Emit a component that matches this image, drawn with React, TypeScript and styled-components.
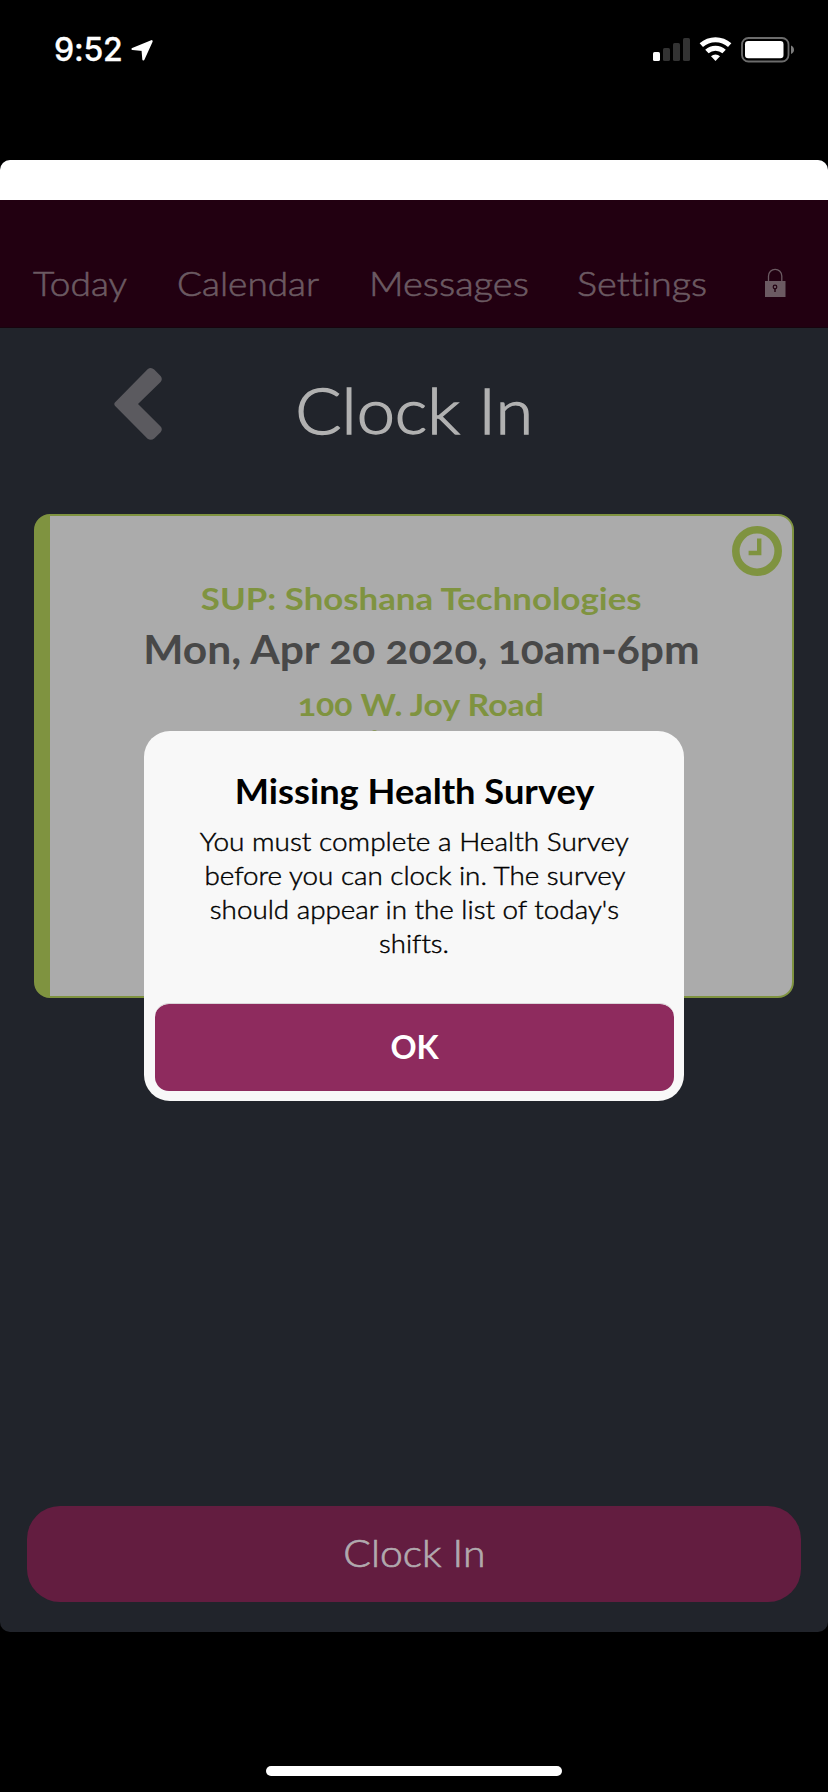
import React from "react";
import styled, { createGlobalStyle } from "styled-components";

const GlobalStyle = createGlobalStyle`
  * { box-sizing: border-box; }
  body { margin: 0; background: #000; }
  button { border: 0; padding: 0; font: inherit; color: inherit; }
`;

const Screen = styled.div`
  position: relative;
  width: 828px;
  height: 1792px;
  display: flex;
  flex-direction: column;
  background: #000;
  font-family: Lato, "Open Sans", sans-serif;
  overflow: hidden;
`;

const Wide = styled.span<{ $by: number; $from?: "left" | "center" }>`
  display: inline-block;
  white-space: nowrap;
  font-variant-ligatures: none;
  transform: scaleX(${(p) => p.$by});
  transform-origin: ${(p) => p.$from ?? "center"};
`;

const StatusBar = styled.div`
  height: 160px;
  padding: 30px 34px 0 54px;
  display: flex;
  justify-content: space-between;
  align-items: flex-start;
`;

const StatusGroup = styled.div<{ $gap: number }>`
  height: 40px;
  display: flex;
  align-items: center;
  gap: ${(p) => p.$gap}px;
  color: #fff;
`;

const Time = styled.span`
  width: 69px;
  font: 500 32px/40px Inter, sans-serif;
  letter-spacing: -0.2px;
  -webkit-text-stroke: 0.3px #fff;
`;

const Sheet = styled.div`
  height: 1472px;
  border-radius: 10px;
  overflow: hidden;
  display: flex;
  flex-direction: column;
  background: #21242b;
`;

const WhiteStrip = styled.div`
  height: 40px;
  background: #fff;
`;

const Nav = styled.nav`
  height: 128px;
  padding: 62px 0 0 33px;
  display: grid;
  grid-template-columns: 144px 192px 208px 188px auto;
  align-items: start;
  justify-items: start;
  background: #220011;
  border-bottom: 1px solid #17040e;
  color: #6b5a62;
  font-size: 34px;
  font-weight: 300;
  line-height: 41px;
  -webkit-text-stroke: 0.6px #6b5a62;
`;

const LockIcon = styled.svg`
  display: block;
  margin-top: 6px;
`;

const TitleRow = styled.header`
  height: 186px;
  padding-top: 40px;
  display: grid;
  grid-template-columns: 1fr auto 1fr;
  align-items: start;
`;

const BackButton = styled.button`
  justify-self: start;
  margin-left: 114px;
  background: none;
  svg { display: block; }
`;

const Title = styled.h1`
  margin: 2px 0 0;
  font-size: 64px;
  font-weight: 300;
  line-height: 80px;
  color: #b1b1b1;
  -webkit-text-stroke: 1.4px #b1b1b1;
`;

const Card = styled.section`
  position: relative;
  height: 484px;
  margin: 0 34px;
  padding-top: 56px;
  display: flex;
  flex-direction: column;
  align-items: center;
  border: 2px solid #7f9340;
  border-left-width: 16px;
  border-radius: 16px;
  background: #ababab;
  font-weight: 700;
`;

const CardLine = styled.div`
  font-size: 31px;
  line-height: 52px;
  color: #7f9340;
  font-variant-numeric: oldstyle-nums;
`;

const CardDate = styled.div`
  margin: 0 0 3px;
  font-size: 40px;
  line-height: 51px;
  color: #484848;
  font-variant-numeric: oldstyle-nums;
`;

const CardTip = styled.div`
  width: 5px;
  height: 2px;
  margin: 0 94px 0 0;
  border-radius: 2px 2px 0 0;
  background: #8c9a5e;
`;

const ClockBadge = styled.svg`
  position: absolute;
  top: 10px;
  right: 10px;
`;

const ClockInButton = styled.button`
  height: 96px;
  margin: auto 27px 30px;
  padding-bottom: 2px;
  border-radius: 33px;
  background: #631d40;
  color: #b1a9ae;
  font-size: 37px;
  font-weight: 300;
  line-height: 46px;
  -webkit-text-stroke: 0.7px #b1a9ae;
`;

const HomeBar = styled.div`
  width: 296px;
  height: 10px;
  margin: auto auto 16px;
  border-radius: 5px;
  background: #fff;
`;

const Dialog = styled.div`
  position: absolute;
  top: 731px;
  left: 144px;
  width: 540px;
  height: 370px;
  padding: 40px 10px 10px 11px;
  display: flex;
  flex-direction: column;
  text-align: center;
  border-radius: 26px;
  background: #f8f8f8;
  color: #000;
`;

const DialogTitle = styled.h2`
  margin: 0 0 13px;
  font-size: 34px;
  line-height: 40px;
  font-weight: 700;
`;

const DialogText = styled.p`
  margin: 0;
  display: flex;
  flex-direction: column;
  align-items: center;
  font-size: 26px;
  font-weight: 300;
  line-height: 34px;
  -webkit-text-stroke: 0.45px #000;
`;

const DialogButton = styled.button`
  height: 88px;
  margin-top: auto;
  padding-bottom: 4px;
  border-top: 1px solid #dcd5d9;
  border-radius: 14px;
  background: #8e2b5e;
  background-clip: padding-box;
  color: #fff;
  font-size: 33px;
  font-weight: 700;
  line-height: 40px;
`;

const LocationArrow = () => (
  <svg width="23" height="23" viewBox="0 0 23 23">
    <path
      d="M20.6 2.2 L1.6 10 L11.6 11 L12.4 20.4 Z"
      fill="#fff"
      stroke="#fff"
      strokeWidth="2.2"
      strokeLinejoin="round"
    />
  </svg>
);

const Signal = () => (
  <svg width="37" height="26" viewBox="0 0 37 26">
    <rect x="0" y="15" width="7" height="9" rx="1.6" fill="#fff" />
    <rect x="10" y="11" width="7" height="13" rx="1.6" fill="#333" />
    <rect x="20" y="6" width="7" height="18" rx="1.6" fill="#333" />
    <rect x="30" y="1" width="7" height="23" rx="1.6" fill="#333" />
  </svg>
);

const Wifi = () => (
  <svg width="33" height="26" viewBox="0 0 33 26">
    <g fill="none" stroke="#fff" strokeWidth="5">
      <path d="M2.3 8.2 A21.2 21.2 0 0 1 30.7 8.2" />
      <path d="M7.9 14.5 A12.8 12.8 0 0 1 25.1 14.5" />
    </g>
    <path d="M16.5 24 L12 19.3 A6.5 6.5 0 0 1 21 19.3 Z" fill="#fff" />
  </svg>
);

const Battery = () => (
  <svg width="53" height="26" viewBox="0 0 53 26">
    <rect x="1" y="1" width="46.5" height="23.5" rx="6.5" fill="none" stroke="#6c6c6c" strokeWidth="1.8" />
    <rect x="4" y="4" width="38.5" height="17.3" rx="3.2" fill="#fff" />
    <path d="M50 8.5 Q53 9.8 53 12.8 Q53 15.8 50 17 Z" fill="#7c7c7c" />
  </svg>
);

export default function App() {
  return (
    <Screen>
      <GlobalStyle />
      <StatusBar>
        <StatusGroup $gap={8}>
          <Time>9:52</Time>
          <LocationArrow />
        </StatusGroup>
        <StatusGroup $gap={9}>
          <Signal />
          <Wifi />
          <Battery />
        </StatusGroup>
      </StatusBar>

      <Sheet>
        <WhiteStrip />
        <Nav>
          <Wide $by={1.089} $from="left">Today</Wide>
          <Wide $by={1.088} $from="left">Calendar</Wide>
          <Wide $by={1.12} $from="left">Messages</Wide>
          <Wide $by={1.11} $from="left">Settings</Wide>
          <LockIcon width="21" height="29" viewBox="0 0 21 29">
            <path d="M3.5 13 V8 A6.6 6.6 0 0 1 16.8 8 V13" fill="none" stroke="#6b5a62" strokeWidth="1.3" />
            <rect x="0" y="13" width="20.5" height="16" fill="#6b5a62" />
            <circle cx="10" cy="19" r="1.8" fill="none" stroke="#220011" strokeWidth="1.2" />
            <path d="M10 20.5 V24" stroke="#220011" strokeWidth="1.4" />
          </LockIcon>
        </Nav>

        <TitleRow>
          <BackButton aria-label="Back">
            <svg width="49" height="72" viewBox="0 0 49 72">
              <path
                d="M0.9 34.4 L33.6 1.2 Q37 -1.2 40.2 1.6 L46.6 8 Q49 11 46.6 14 L24 36 L46.6 58.5 Q49 61 46.6 64.3 L40.2 70.5 Q37 73 33.6 70.8 L0.9 37.8 Q-0.3 36 0.9 34.4 Z"
                fill="#5b5a5f"
              />
            </svg>
          </BackButton>
          <Title>
            <Wide $by={1.07}>Clock In</Wide>
          </Title>
        </TitleRow>

        <Card>
          <ClockBadge width="50" height="50" viewBox="0 0 50 50">
            <circle cx="25" cy="25" r="21.2" fill="none" stroke="#7f9340" strokeWidth="7.6" />
            <path d="M27.2 12.4 V27 H16.6" fill="none" stroke="#7f9340" strokeWidth="4.4" />
          </ClockBadge>
          <CardLine>
            <Wide $by={1.123}>SUP: Shoshana Technologies</Wide>
          </CardLine>
          <CardDate>
            <Wide $by={1.064}>Mon, Apr 20 2020, 10am-6pm</Wide>
          </CardDate>
          <CardLine>
            <Wide $by={1.09}>100 W. Joy Road</Wide>
          </CardLine>
          <CardTip />
        </Card>

        <ClockInButton>
          <Wide $by={1.105}>Clock In</Wide>
        </ClockInButton>
      </Sheet>

      <HomeBar />

      <Dialog role="dialog">
        <DialogTitle>
          <Wide $by={1.066}>Missing Health Survey</Wide>
        </DialogTitle>
        <DialogText>
          <Wide $by={1.0765}>You must complete a Health Survey</Wide>
          <Wide $by={1.069}>before you can clock in. The survey</Wide>
          <Wide $by={1.069}>should appear in the list of today's</Wide>
          <Wide $by={1.058}>shifts.</Wide>
        </DialogText>
        <DialogButton>
          <Wide $by={0.98}>OK</Wide>
        </DialogButton>
      </Dialog>
    </Screen>
  );
}
